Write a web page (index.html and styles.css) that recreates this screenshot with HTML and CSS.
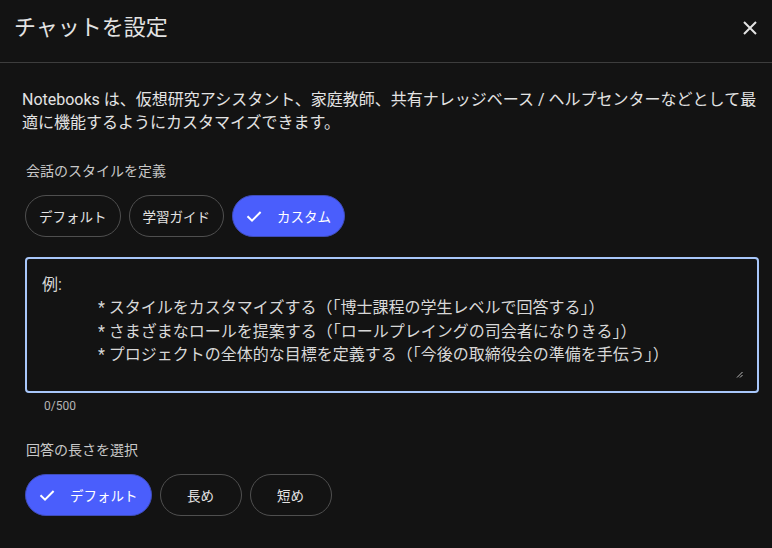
FILE: index.html
```html
<!DOCTYPE html>
<html lang="ja">
<head>
<meta charset="utf-8">
<link rel="stylesheet" href="styles.css">
</head>
<body>
<div class="dialog">
  <header class="header">
    <h1 class="title">チャットを設定</h1>
    <button class="close" aria-label="閉じる">
      <svg width="14" height="14" viewBox="0 0 14 14"><path d="M1 1L13 13M13 1L1 13" stroke="#e3e3e3" stroke-width="2" fill="none"/></svg>
    </button>
  </header>
  <main class="content">
    <p class="intro">Notebooks は、仮想研究アシスタント、家庭教師、共有ナレッジベース / ヘルプセンターなどとして最適に機能するようにカスタマイズできます。</p>

    <section class="section">
      <div class="label">会話のスタイルを定義</div>
      <div class="chips">
        <button class="chip">デフォルト</button>
        <button class="chip">学習ガイド</button>
        <button class="chip selected">
          <svg class="check" width="18" height="18" viewBox="0 0 18 18"><path d="M2.5 9.2L7 13.6L15.6 5" stroke="#fff" stroke-width="2" fill="none"/></svg>
          カスタム
        </button>
      </div>
      <div class="textbox">
        <div class="line">例:</div>
        <div class="line indent">* スタイルをカスタマイズする（「博士課程の学生レベルで回答する」）</div>
        <div class="line indent">* さまざまなロールを提案する（「ロールプレイングの司会者になりきる」）</div>
        <div class="line indent">* プロジェクトの全体的な目標を定義する（「今後の取締役会の準備を手伝う」）</div>
        <svg class="grip" width="7" height="7" viewBox="0 0 7 7"><path d="M1 6.5L6.5 1M4 6.5L6.5 4" stroke="#bbb" stroke-width="1" fill="none"/></svg>
      </div>
      <div class="counter">0/500</div>
    </section>

    <section class="section second">
      <div class="label">回答の長さを選択</div>
      <div class="chips">
        <button class="chip selected">
          <svg class="check" width="18" height="18" viewBox="0 0 18 18"><path d="M2.5 9.2L7 13.6L15.6 5" stroke="#fff" stroke-width="2" fill="none"/></svg>
          デフォルト
        </button>
        <button class="chip wide">長め</button>
        <button class="chip wide">短め</button>
      </div>
    </section>
  </main>
</div>
</body>
</html>
```

FILE: styles.css
```css
* { box-sizing: border-box; }
html, body {
  margin: 0;
  background: #131313;
}
body {
  font-family: Roboto, "Noto Sans CJK JP", sans-serif;
  color: #e3e3e3;
  width: 772px;
  height: 548px;
  overflow: hidden;
}
.header {
  height: 63px;
  border-bottom: 1px solid #3d3d3d;
  display: flex;
  align-items: flex-start;
  justify-content: space-between;
  padding: 13px 14px 0 14px;
}
.title {
  margin: 0;
  font-size: 22px;
  font-weight: 400;
  line-height: 30px;
  color: #e3e3e3;
}
.close {
  background: none;
  border: none;
  padding: 0;
  margin-top: 8px;
  margin-right: 1px;
  width: 14px;
  height: 14px;
  display: flex;
}
.content {
  padding: 25px 13px 0 22px;
}
.intro {
  margin: 0;
  font-size: 16px;
  line-height: 23px;
  color: #e3e3e3;
}
.section {
  padding-left: 3px;
  margin-top: 27px;
}
.section.second {
  margin-top: 26px;
}
.label {
  padding-left: 1px;
  font-size: 14px;
  line-height: 20px;
  color: #c8c8c8;
}
.chips {
  display: flex;
  gap: 8px;
  margin-top: 14px;
}
.chip {
  height: 42px;
  border-radius: 21px;
  border: 1px solid #4f4f4f;
  background: transparent;
  color: #e3e3e3;
  font-family: Roboto, "Noto Sans CJK JP", sans-serif;
  font-size: 13.5px;
  padding: 0 13px;
  display: flex;
  align-items: center;
}
.chip.wide {
  width: 82px;
  justify-content: center;
  padding: 0;
}
.chip.selected {
  background: #4a5efc;
  border-color: #3f4cb8;
  color: #fff;
  padding: 0 13px 0 12px;
}
.check {
  margin-right: 14px;
}
.textbox {
  position: relative;
  margin-top: 20px;
  height: 136px;
  border: 2px solid #a8c7fa;
  border-radius: 4px;
  padding: 14px 15px;
  font-size: 16px;
  line-height: 23.3px;
  color: #d8d8d8;
}
.indent {
  padding-left: 56px;
}
.grip {
  position: absolute;
  right: 14px;
  bottom: 13px;
}
.counter {
  margin-top: 5px;
  padding-left: 19px;
  font-size: 12px;
  line-height: 16px;
  color: #b4b4b4;
}
```
